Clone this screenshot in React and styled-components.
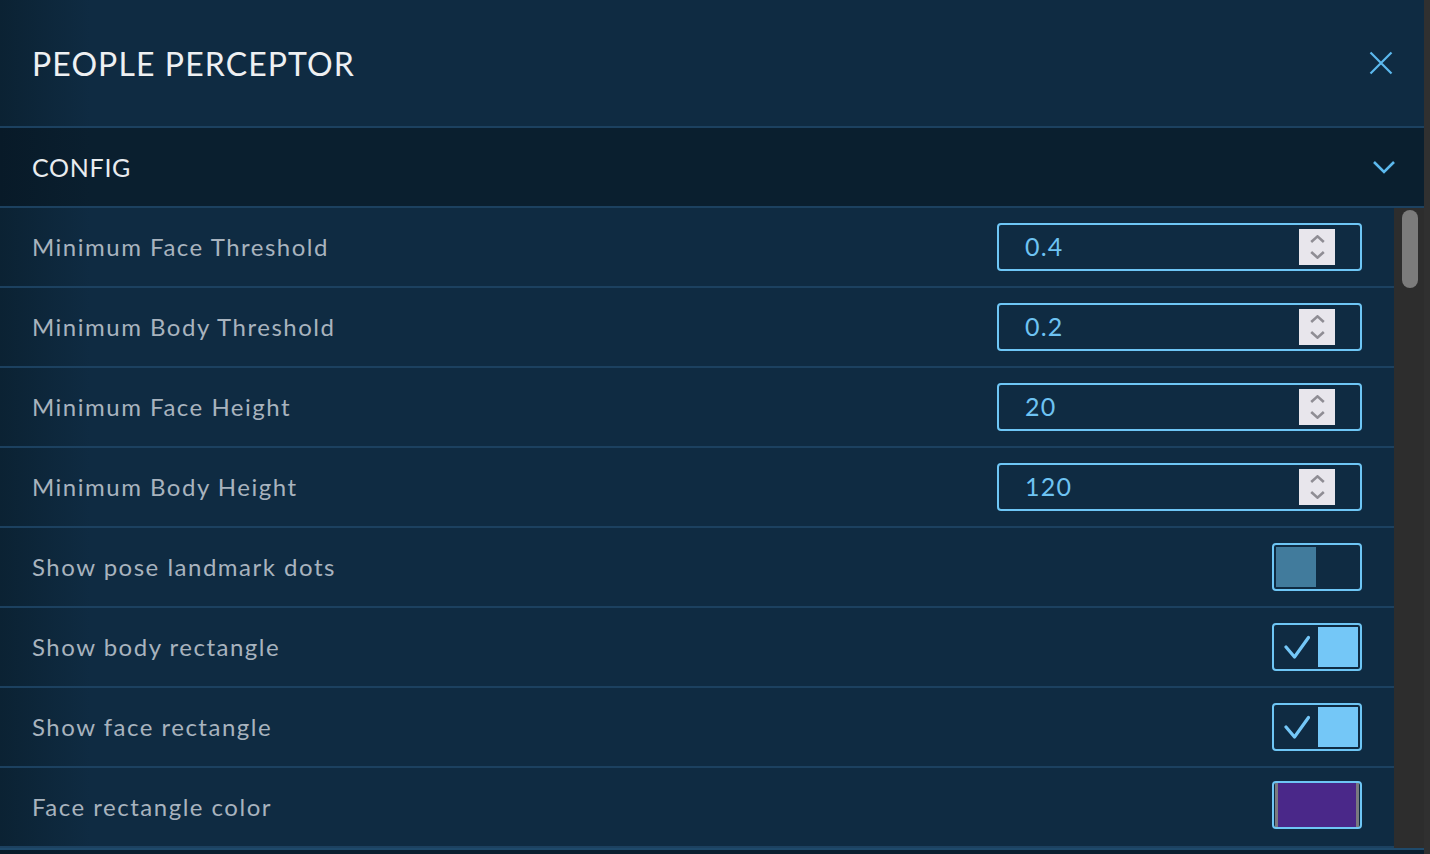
import React from "react";
import styled, { createGlobalStyle } from "styled-components";

const GlobalStyle = createGlobalStyle`
  html, body { margin: 0; padding: 0; }
  body {
    background: #303030;
    font-family: "Lato", "Open Sans", sans-serif;
    overflow: hidden;
  }
`;

const Panel = styled.div`
  width: 1424px;
  height: 854px;
  overflow: hidden;
  display: flex;
  flex-direction: column;
  background: linear-gradient(to right, #0b2233 0px, #0f2b42 90px, #0f2b42 100%);
`;

const Header = styled.header`
  height: 126px;
  flex: none;
  display: flex;
  align-items: center;
  justify-content: space-between;
  padding: 0 32px 0 32px;
  border-bottom: 2px solid #1c4160;
`;

const Title = styled.h1`
  margin: 0;
  font-size: 32px;
  font-weight: 400;
  color: #eef0f2;
  letter-spacing: 1.1px;
`;

const IconButton = styled.button`
  border: 0;
  background: none;
  padding: 0;
  margin-right: -1px;
  display: flex;
  cursor: pointer;
`;

const SectionHeader = styled.div`
  height: 78px;
  flex: none;
  display: flex;
  align-items: center;
  justify-content: space-between;
  padding: 0 28px 0 32px;
  background: linear-gradient(to right, #081a28 0px, #0a1f2f 90px, #0a1f2f 100%);
  border-bottom: 2px solid #1c4160;
  border-top: ${(p) => (p.$top ? "2px solid #1f4a6b" : "0")};
`;

const SectionTitle = styled.span`
  font-size: 25px;
  color: #e9ecef;
  letter-spacing: 0.7px;
`;

const ScrollArea = styled.div`
  height: 640px;
  flex: none;
  display: flex;
  overflow: hidden;
`;

const List = styled.div`
  flex: 1;
  display: flex;
  flex-direction: column;
`;

const Row = styled.div`
  height: 78px;
  flex: none;
  display: flex;
  align-items: center;
  justify-content: space-between;
  padding: 0 32px;
  border-bottom: 2px solid #1c4160;
`;

const Label = styled.span`
  font-size: 24px;
  color: #a8b3be;
  letter-spacing: 1.5px;
  margin-top: -2px;
`;

const NumberBox = styled.div`
  width: 365px;
  height: 48px;
  box-sizing: border-box;
  border: 2px solid #6ec6f5;
  border-radius: 4px;
  display: flex;
  align-items: center;
  justify-content: space-between;
`;

const NumberValue = styled.span`
  font-size: 25px;
  color: #6ec3f2;
  padding-left: 26px;
  letter-spacing: 1.2px;
  margin-top: -2px;
`;

const Spinner = styled.div`
  width: 36px;
  height: 36px;
  margin-right: 25px;
  background: #e8e6ec;
  display: flex;
  flex-direction: column;
  align-items: center;
  justify-content: center;
  gap: 8px;
`;

const Toggle = styled.div`
  width: 90px;
  height: 48px;
  box-sizing: border-box;
  border: 2px solid #6ec6f5;
  border-radius: 4px;
  display: flex;
  align-items: center;
  justify-content: ${(p) => (p.$on ? "space-between" : "flex-start")};
  padding: 0 2px;
`;

const Knob = styled.div`
  width: 40px;
  height: 40px;
  background: ${(p) => (p.$on ? "#74c7f7" : "#417b9c")};
`;

const CheckSlot = styled.div`
  width: 40px;
  height: 40px;
  display: flex;
  align-items: center;
  justify-content: center;
`;

const Swatch = styled.div`
  width: 90px;
  height: 48px;
  margin-top: -5px;
  box-sizing: border-box;
  border: 2px solid #6ec6f5;
  border-radius: 4px;
  display: flex;
  padding: 0 1px;
`;

const SwatchFill = styled.div`
  flex: 1;
  background: ${(p) => p.$color};
  border-left: 3px solid #7a7a80;
  border-right: 3px solid #7a7a80;
`;

const ScrollTrack = styled.div`
  width: 30px;
  flex: none;
  background: #2d2d2d;
  padding: 2px 6px 0 8px;
  box-sizing: border-box;
`;

const ScrollThumb = styled.div`
  width: 16px;
  height: 78px;
  border-radius: 8px;
  background: #7b7b7b;
`;

const Chevron = ({ up }) => (
  <svg width="15" height="8" viewBox="0 0 15 8">
    <path
      d={up ? "M1.2 7 L7.5 1.4 L13.8 7" : "M1.2 1 L7.5 6.6 L13.8 1"}
      fill="none"
      stroke="#8f8d94"
      strokeWidth="2.6"
    />
  </svg>
);

const NumberField = ({ value }) => (
  <NumberBox>
    <NumberValue>{value}</NumberValue>
    <Spinner>
      <Chevron up />
      <Chevron />
    </Spinner>
  </NumberBox>
);

const Switch = ({ on }) => (
  <Toggle $on={on}>
    {on ? (
      <>
        <CheckSlot>
          <svg width="28" height="24" viewBox="0 0 28 24">
            <path
              d="M4 12 L12.5 22 L26.5 2.5"
              fill="none"
              stroke="#74c7f7"
              strokeWidth="3.2"
              strokeLinecap="round"
              strokeLinejoin="round"
            />
          </svg>
        </CheckSlot>
        <Knob $on />
      </>
    ) : (
      <Knob />
    )}
  </Toggle>
);

const rows = [
  { label: "Minimum Face Threshold", type: "number", value: "0.4" },
  { label: "Minimum Body Threshold", type: "number", value: "0.2" },
  { label: "Minimum Face Height", type: "number", value: "20" },
  { label: "Minimum Body Height", type: "number", value: "120" },
  { label: "Show pose landmark dots", type: "toggle", value: false },
  { label: "Show body rectangle", type: "toggle", value: true },
  { label: "Show face rectangle", type: "toggle", value: true },
  { label: "Face rectangle color", type: "color", value: "#4a2889" },
];

export default function App() {
  return (
    <>
      <GlobalStyle />
      <Panel>
        <Header>
          <Title>PEOPLE PERCEPTOR</Title>
          <IconButton aria-label="Close">
            <svg width="24" height="24" viewBox="0 0 24 24">
              <path d="M1.5 1.5 L22.5 22.5 M22.5 1.5 L1.5 22.5" stroke="#5cb9ee" strokeWidth="2.2" fill="none" />
            </svg>
          </IconButton>
        </Header>
        <SectionHeader>
          <SectionTitle>CONFIG</SectionTitle>
          <svg width="24" height="14" viewBox="0 0 24 14">
            <path d="M2 2 L12 12 L22 2" stroke="#5cb9ee" strokeWidth="2.6" fill="none" />
          </svg>
        </SectionHeader>
        <ScrollArea>
          <List>
            {rows.map((r) => (
              <Row key={r.label}>
                <Label>{r.label}</Label>
                {r.type === "number" && <NumberField value={r.value} />}
                {r.type === "toggle" && <Switch on={r.value} />}
                {r.type === "color" && (
                  <Swatch>
                    <SwatchFill $color={r.value} />
                  </Swatch>
                )}
              </Row>
            ))}
          </List>
          <ScrollTrack>
            <ScrollThumb />
          </ScrollTrack>
        </ScrollArea>
        <SectionHeader $top />
      </Panel>
    </>
  );
}
